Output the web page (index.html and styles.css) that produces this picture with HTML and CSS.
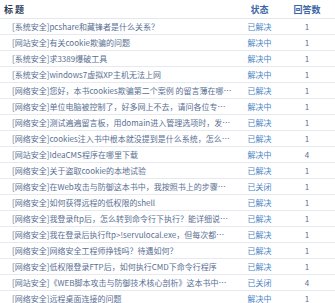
FILE: index.html
```html
<!DOCTYPE html>
<html lang="zh">
<head>
<meta charset="utf-8">
<link rel="stylesheet" href="styles.css">
</head>
<body>
<div class="list">
  <div class="head">
    <div class="c-title">标 题</div>
    <div class="c-state">状态</div>
    <div class="c-num">回答数</div>
  </div>
  <div class="row"><div class="c-title">[系统安全]pcshare和藏锋者是什么关系？</div><div class="c-state">已解决</div><div class="c-num">1</div></div>
  <div class="row"><div class="c-title">[网站安全]有关cookie欺骗的问题</div><div class="c-state">解决中</div><div class="c-num">1</div></div>
  <div class="row"><div class="c-title">[系统安全]求3389爆破工具</div><div class="c-state">解决中</div><div class="c-num">1</div></div>
  <div class="row"><div class="c-title">[系统安全]windows7虚拟XP主机无法上网</div><div class="c-state">解决中</div><div class="c-num">1</div></div>
  <div class="row"><div class="c-title">[网络安全]您好，本书cookies欺骗第二个案例 的留言薄在哪里呢</div><div class="c-state">已解决</div><div class="c-num">1</div></div>
  <div class="row"><div class="c-title">[网络安全]单位电脑被控制了，好多网上不去，请问各位专家怎么办</div><div class="c-state">解决中</div><div class="c-num">1</div></div>
  <div class="row"><div class="c-title">[网络安全]测试遍遍留言板，用domain进入管理选项时，发现不对</div><div class="c-state">已解决</div><div class="c-num">1</div></div>
  <div class="row"><div class="c-title">[网络安全]cookies注入书中根本就没提到是什么系统，怎么测试呢</div><div class="c-state">已解决</div><div class="c-num">1</div></div>
  <div class="row"><div class="c-title">[网站安全]IdeaCMS程序在哪里下载</div><div class="c-state">解决中</div><div class="c-num">4</div></div>
  <div class="row"><div class="c-title">[网络安全]关于盗取cookie的本地试验</div><div class="c-state">已解决</div><div class="c-num">1</div></div>
  <div class="row"><div class="c-title">[网络安全]在Web攻击与防御这本书中，我按照书上的步骤进行操作</div><div class="c-state">已关闭</div><div class="c-num">1</div></div>
  <div class="row"><div class="c-title">[网络安全]如何获得远程的低权限的shell</div><div class="c-state">已解决</div><div class="c-num">1</div></div>
  <div class="row"><div class="c-title">[网络安全]我登录ftp后，怎么转到命令行下执行？能详细说一下吗</div><div class="c-state">已解决</div><div class="c-num">1</div></div>
  <div class="row"><div class="c-title">[网络安全]我在登录后执行ftp>!servulocal.exe，但每次都说不行</div><div class="c-state">已解决</div><div class="c-num">1</div></div>
  <div class="row"><div class="c-title">[网络安全]网络安全工程师挣钱吗？待遇如何？</div><div class="c-state">已解决</div><div class="c-num">1</div></div>
  <div class="row"><div class="c-title">[网络安全]低权限登录FTP后，如何执行CMD下命令行程序</div><div class="c-state">已解决</div><div class="c-num">1</div></div>
  <div class="row"><div class="c-title">[网站安全]《WEB脚本攻击与防御技术核心剖析》这本书中的演示程序</div><div class="c-state">已关闭</div><div class="c-num">4</div></div>
  <div class="row"><div class="c-title">[网络安全]远程桌面连接的问题</div><div class="c-state">解决中</div><div class="c-num">1</div></div>
</div>
</body>
</html>
```
FILE: styles.css
```css
html, body {
  margin: 0;
  padding: 0;
  background: #fff;
}
body {
  font-family: "Noto Sans CJK SC", "DejaVu Sans", sans-serif;
  font-size: 8px;
  overflow: hidden;
}
.list {
  width: 335px;
}
.head, .row {
  display: grid;
  grid-template-columns: 236px 47px 52px;
  align-items: center;
}
.head {
  height: 18px;
  border-bottom: 1px solid #e3e7ee;
  font-weight: bold;
  color: #2a3a56;
  font-size: 9px;
}
.row {
  height: 15px;
  border-bottom: 1px solid #e6e9f0;
  color: #5a6f92;
}
.c-title {
  padding-left: 12px;
  padding-right: 4px;
  white-space: nowrap;
  overflow: hidden;
  text-overflow: ellipsis;
}
.head .c-title {
  padding-left: 4px;
}
.c-state {
  text-align: center;
  color: #4a84c6;
}
.head .c-state, .head .c-num {
  color: #3d67a6;
}
.c-num {
  text-align: center;
  color: #5a6f92;
  padding-right: 4px;
}
```
